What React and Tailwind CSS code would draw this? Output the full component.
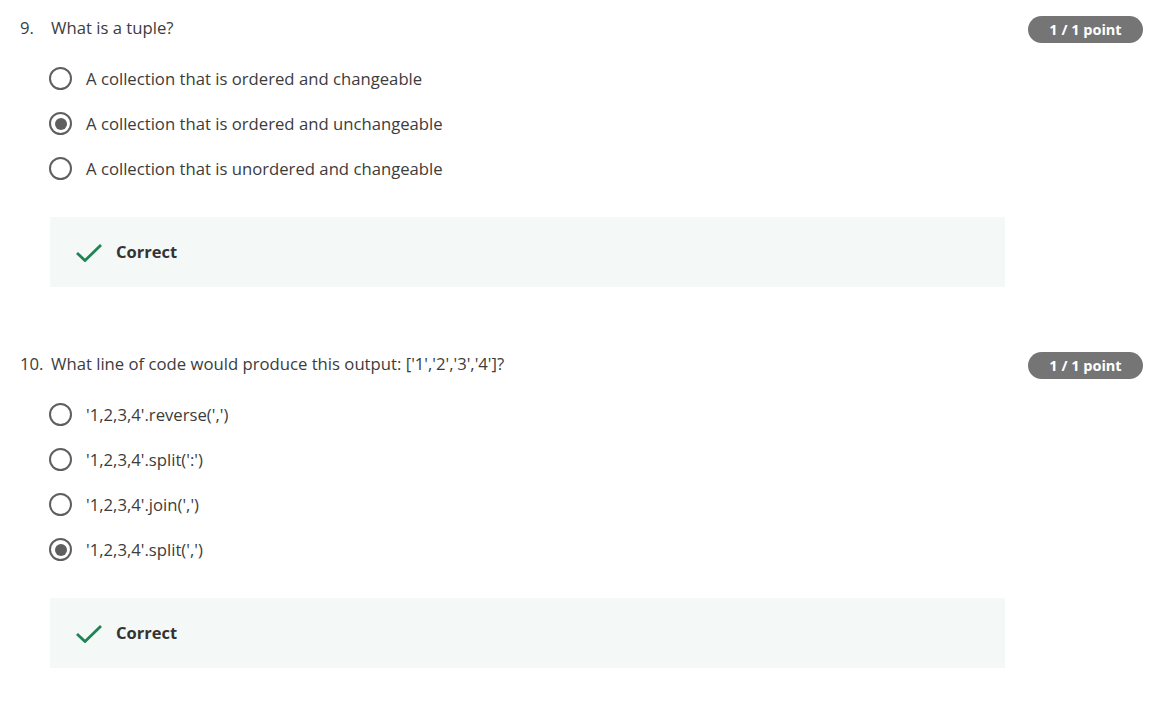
import React from "react";

const font = { fontFamily: '"Open Sans", "Noto Sans", sans-serif' };

function Radio({ checked }) {
  return (
    <span className="w-[23px] h-[23px] rounded-full border-[2.5px] border-[#5f5f5f] flex items-center justify-center shrink-0 bg-white">
      {checked && <span className="w-[12px] h-[12px] rounded-full bg-[#5f5f5f]" />}
    </span>
  );
}

function Question({ num, text, options, selected, first }) {
  return (
    <div className={first ? "" : "mt-[65px]"}>
      <div className="flex items-start h-[27px]">
        <span className="w-[31px] shrink-0 text-[16.7px] leading-[24px] text-[#3c3c3c]">{num}</span>
        <span className="flex-1 text-[16.7px] leading-[24px] text-[#3c3c3c]">{text}</span>
        <span className="w-[115px] h-[27px] rounded-full bg-[#757575] text-white text-[14.5px] font-bold flex items-center justify-center">
          1 / 1 point
        </span>
      </div>
      <div className="mt-[13px] pl-[29px]">
        {options.map((o, i) => (
          <div key={i} className="flex items-center h-[45px]">
            <Radio checked={i === selected} />
            <span className="ml-[14px] text-[16.7px] text-[#3c3c3c]">{o}</span>
          </div>
        ))}
      </div>
      <div className="mt-[26px] ml-[30px] w-[955px] h-[70px] bg-[#f4f8f7] flex items-center pl-[26px]">
        <svg width="26" height="19" viewBox="0 0 26 19" className="shrink-0">
          <polyline points="1,10 9,17.5 25,2" fill="none" stroke="#1f8354" strokeWidth="2.8" />
        </svg>
        <span className="ml-[14px] text-[16.5px] font-bold text-[#333]">Correct</span>
      </div>
    </div>
  );
}

export default function App() {
  return (
    <div className="w-[1155px] h-[704px] bg-white pt-[16px] pl-[20px] pr-[12px]" style={font}>
      <Question
        first
        num="9."
        text="What is a tuple?"
        selected={1}
        options={[
          "A collection that is ordered and changeable",
          "A collection that is ordered and unchangeable",
          "A collection that is unordered and changeable",
        ]}
      />
      <Question
        num="10."
        text="What line of code would produce this output: ['1','2','3','4']?"
        selected={3}
        options={[
          "'1,2,3,4'.reverse(',')",
          "'1,2,3,4'.split(':')",
          "'1,2,3,4'.join(',')",
          "'1,2,3,4'.split(',')",
        ]}
      />
    </div>
  );
}
